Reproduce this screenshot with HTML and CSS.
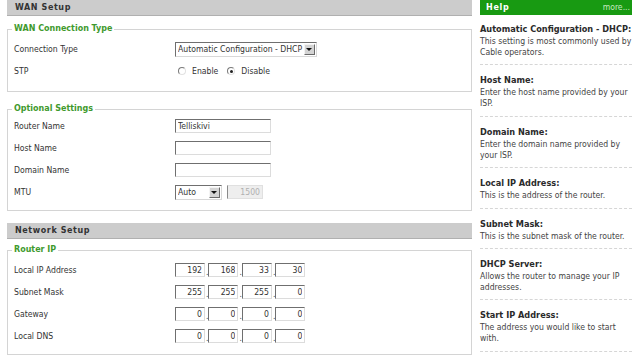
FILE: index.html
```html
<!DOCTYPE html>
<html lang="en">
<head>
  <meta charset="UTF-8">
  <title>WAN Setup</title>
  <link rel="stylesheet" href="styles.css">
</head>
<body>

<div class="page">
  <div class="main">
    <h2 class="bar">WAN Setup</h2>

    <fieldset class="group first">
      <legend>WAN Connection Type</legend>
      <div class="row">
        <label>Connection Type</label>
        <div class="select wide">
          <select><option>Automatic Configuration - DHCP</option></select>
        </div>
      </div>
      <div class="row">
        <label>STP</label>
        <div class="radios">
          <input type="radio" name="stp" id="stp-on"><label for="stp-on">Enable</label>
          <input type="radio" name="stp" id="stp-off" checked><label for="stp-off">Disable</label>
        </div>
      </div>
    </fieldset>

    <fieldset class="group tight">
      <legend>Optional Settings</legend>
      <div class="row">
        <label>Router Name</label>
        <input type="text" class="text" value="Telliskivi">
      </div>
      <div class="row">
        <label>Host Name</label>
        <input type="text" class="text">
      </div>
      <div class="row">
        <label>Domain Name</label>
        <input type="text" class="text">
      </div>
      <div class="row">
        <label>MTU</label>
        <div class="select short">
          <select><option>Auto</option></select>
        </div>
        <input type="text" class="text mtu" value="1500" disabled>
      </div>
    </fieldset>

    <h2 class="bar">Network Setup</h2>

    <fieldset class="group last">
      <legend>Router IP</legend>
      <div class="row">
        <label>Local IP Address</label>
        <div class="ip"><input value="192">.<input value="168">.<input value="33">.<input value="30"></div>
      </div>
      <div class="row">
        <label>Subnet Mask</label>
        <div class="ip"><input value="255">.<input value="255">.<input value="255">.<input value="0"></div>
      </div>
      <div class="row">
        <label>Gateway</label>
        <div class="ip"><input value="0">.<input value="0">.<input value="0">.<input value="0"></div>
      </div>
      <div class="row">
        <label>Local DNS</label>
        <div class="ip"><input value="0">.<input value="0">.<input value="0">.<input value="0"></div>
      </div>
    </fieldset>
  </div>

  <div class="help">
    <div class="help-bar">
      <span>Help</span>
      <a href="#">more...</a>
    </div>
    <dl>
      <dt>Automatic Configuration - DHCP:</dt>
      <dd>This setting is most commonly used by<br>Cable operators.</dd>
      <dt>Host Name:</dt>
      <dd>Enter the host name provided by your<br>ISP.</dd>
      <dt>Domain Name:</dt>
      <dd>Enter the domain name provided by<br>your ISP.</dd>
      <dt>Local IP Address:</dt>
      <dd>This is the address of the router.</dd>
      <dt>Subnet Mask:</dt>
      <dd>This is the subnet mask of the router.</dd>
      <dt>DHCP Server:</dt>
      <dd>Allows the router to manage your IP<br>addresses.</dd>
      <dt>Start IP Address:</dt>
      <dd>The address you would like to start<br>with.</dd>
    </dl>
  </div>
</div>

</body>
</html>
```

FILE: styles.css
```css
body {
  margin: 0;
  background: #ffffff;
  font-family: "DejaVu Sans Condensed", "Liberation Sans", Arial, sans-serif;
  font-size: 8.6px;
  color: #333333;
}

.page {
  display: flex;
  align-items: flex-start;
  padding-left: 7px;
}

.main {
  width: 465px;
}

.bar {
  margin: 0;
  height: 15px;
  line-height: 15px;
  padding-left: 8px;
  background: #cccccc;
  border-bottom: 1px solid #b0b0b0;
  font-family: "DejaVu Sans", Verdana, sans-serif;
  font-size: 8px;
  font-weight: bold;
  letter-spacing: 0.6px;
  color: #333333;
}

.group {
  margin: 8px 0 12px;
  padding: 2px 6px 7px;
  border: 1px solid #d4d4d4;
}

.group.first {
  padding-top: 4px;
  padding-bottom: 9px;
}

.group.tight {
  padding-top: 1px;
}

.group.last {
  margin-top: 6px;
  padding-top: 4px;
}

.group legend {
  padding: 0 2px;
  margin-left: -2px;
  line-height: 10px;
  font-family: "DejaVu Sans", Verdana, sans-serif;
  font-size: 8px;
  font-weight: bold;
  color: #3f9a2e;
}

.row {
  display: flex;
  align-items: center;
  height: 22px;
}

.row > label {
  width: 161px;
  flex: none;
}

/* select boxes */
.select {
  position: relative;
  height: 15px;
  box-sizing: border-box;
  border: 1px solid #6f6f6f;
  border-right-color: #d8d8d8;
  border-bottom-color: #d8d8d8;
  background: #ffffff;
}

.select.wide { width: 142px; }
.select.short { width: 47px; }

.select select {
  appearance: none;
  display: block;
  border: none;
  background: transparent;
  width: 100%;
  height: 13px;
  padding: 0 0 0 2px;
  font: inherit;
  color: #333333;
  outline: none;
}

.select::after {
  content: "";
  position: absolute;
  top: 1px;
  right: 1px;
  width: 11px;
  height: 11px;
  background: #d4d4d4;
  border: 1px solid #f4f4f4;
  border-right-color: #6a6a6a;
  border-bottom-color: #6a6a6a;
  box-sizing: border-box;
}

.select::before {
  content: "";
  position: absolute;
  z-index: 1;
  top: 5px;
  right: 4px;
  border-left: 3px solid transparent;
  border-right: 3px solid transparent;
  border-top: 3px solid #111111;
}

/* radio buttons */
.radios {
  display: flex;
  align-items: center;
  padding-left: 3px;
}

.radios input {
  appearance: none;
  margin: 0 6px 0 0;
  width: 8px;
  height: 8px;
  border-radius: 50%;
  border: 1px solid #e2e2e2;
  border-top-color: #7a7a7a;
  border-left-color: #7a7a7a;
  background: #ffffff;
  display: grid;
  place-content: center;
}

.radios input:checked::before {
  content: "";
  width: 3px;
  height: 3px;
  border-radius: 50%;
  background: #222222;
}

.radios label {
  margin-right: 9px;
}

/* text inputs */
.text,
.ip input {
  box-sizing: border-box;
  height: 14px;
  border: 1px solid #dcdcdc;
  border-top-color: #6f6f6f;
  border-left-color: #6f6f6f;
  background: #ffffff;
  font: inherit;
  color: #333333;
  padding: 0 2px;
  outline: none;
}

.text {
  width: 96px;
}

.text.mtu {
  width: 36px;
  margin-left: 5px;
  text-align: right;
  background: #eeeeee;
  color: #b0b0b0;
  border-color: #e0e0e0;
  border-left-color: #8a8a8a;
}

.ip {
  display: flex;
  align-items: flex-end;
  line-height: 10px;
  color: #444444;
}

.ip input {
  width: 30px;
  text-align: right;
  margin-right: 1px;
}

/* help column */
.help {
  width: 152px;
  margin-left: 8px;
}

.help-bar {
  display: flex;
  justify-content: space-between;
  height: 15px;
  line-height: 15px;
  padding: 0 2px 0 6px;
  background: #189a12;
  font-family: "DejaVu Sans", Verdana, sans-serif;
  font-size: 8px;
  font-weight: bold;
  letter-spacing: 0.7px;
  color: #ffffff;
}

.help-bar a {
  font-family: "DejaVu Sans Condensed", "Liberation Sans", sans-serif;
  font-weight: normal;
  font-size: 8.6px;
  letter-spacing: 0;
  color: #c4e8c0;
  text-decoration: none;
}

.help dl {
  margin: 0;
}

.help dt {
  margin-top: 9px;
  line-height: 12px;
  font-family: "DejaVu Sans", Verdana, sans-serif;
  font-size: 8.2px;
  font-weight: bold;
  color: #2a2a2a;
}

.help dt:first-child {
  margin-top: 8px;
}

.help dd {
  margin: 1px 0 0;
  padding-bottom: 6.4px;
  border-bottom: 1px dashed #d6d6d6;
  line-height: 11px;
  white-space: nowrap;
  color: #444444;
}
```
